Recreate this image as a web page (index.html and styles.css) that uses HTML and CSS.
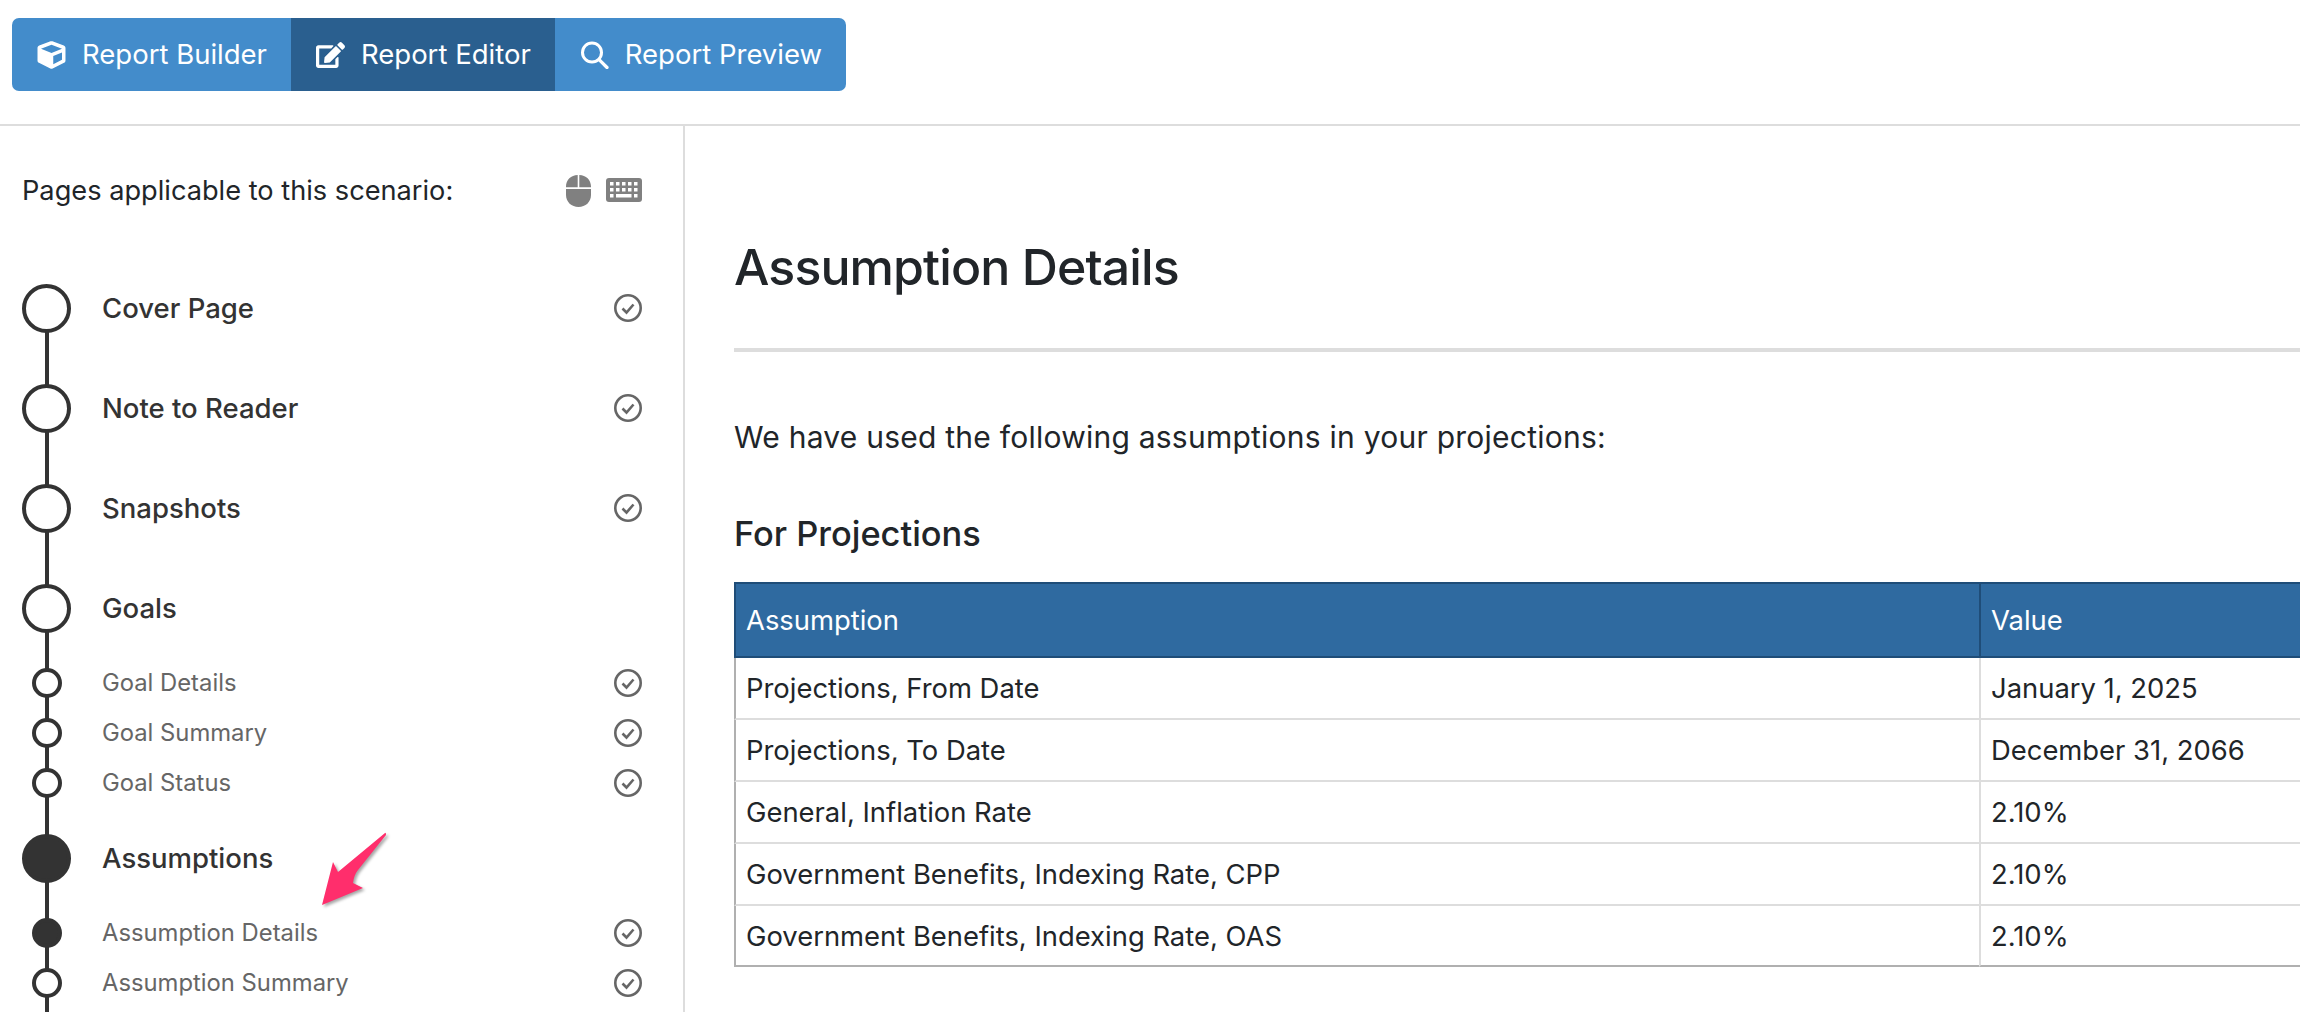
FILE: index.html
```html
<!DOCTYPE html>
<html lang="en">
<head>
<meta charset="utf-8">
<title>Report Editor</title>
<link rel="stylesheet" href="styles.css">
</head>
<body>
<header class="topbar">
  <nav class="btn-group">
    <a class="btn"><svg class="btn-icon" viewBox="0 0 512 512"><path fill="currentColor" d="M239.1 6.3l-208 78c-18.7 7-31.1 25-31.1 45v225.1c0 18.2 10.3 34.8 26.5 42.9l208 104c13.5 6.8 29.4 6.8 42.9 0l208-104c16.3-8.1 26.5-24.8 26.5-42.9V129.3c0-20-12.4-37.9-31.1-44.9l-208-78C262 2.2 250 2.2 239.1 6.3zM256 68.4l192 72v1.1l-192 78-192-78v-1.1l192-72zm32 356V275.5l160-65v133.9l-160 80z"/></svg><span class="btn-text">Report Builder</span></a>
    <a class="btn btn-active"><svg class="btn-icon" viewBox="0 0 576 512"><path fill="currentColor" d="M402.6 83.2l90.2 90.2c3.8 3.8 3.8 10 0 13.8L274.4 405.6l-92.8 10.3c-12.4 1.4-22.9-9.1-21.5-21.5l10.3-92.8L388.8 83.2c3.8-3.8 10-3.8 13.8 0zm162-22.9l-48.8-48.8c-15.2-15.2-39.9-15.2-55.2 0l-35.4 35.4c-3.8 3.8-3.8 10 0 13.8l90.2 90.2c3.8 3.8 10 3.8 13.8 0l35.4-35.4c15.2-15.3 15.2-40 0-55.2zM384 346.2V448H64V128h229.8c3.2 0 6.2-1.3 8.5-3.5l40-40c7.6-7.6 2.2-20.5-8.5-20.5H48C21.5 64 0 85.5 0 112v352c0 26.5 21.5 48 48 48h352c26.5 0 48-21.5 48-48V306.2c0-10.7-12.9-16-20.5-8.5l-40 40c-2.2 2.3-3.5 5.3-3.5 8.5z"/></svg><span class="btn-text">Report Editor</span></a>
    <a class="btn"><svg class="btn-icon" viewBox="0 0 28 28"><circle cx="11.5" cy="11.5" r="9.5" fill="none" stroke="currentColor" stroke-width="3"/><path d="M18.6 18.6L26.5 26.5" fill="none" stroke="currentColor" stroke-width="3.2" stroke-linecap="round"/></svg><span class="btn-text">Report Preview</span></a>
  </nav>
</header>
<div class="layout">
  <aside class="sidebar">
    <div class="side-head">
      <span class="side-title">Pages applicable to this scenario:</span>
      <span class="side-tools">
        <svg class="tool-mouse" viewBox="0 0 25 32"><path fill="currentColor" d="M11.700 0v12.300H0v-.8C0 5 5 0 11.700 0zM13.300 0C20 0 25 5 25 11.500v.8H13.300zM0 14h25v6c0 7-5.500 12-12.500 12S0 27 0 20z"/></svg>
        <svg class="tool-keys" viewBox="0 0 36 24"><rect width="36" height="24" rx="3" fill="currentColor"/><g fill="#fff"><rect x="4" y="4" width="3.500" height="3.500"/><rect x="10" y="4" width="3.500" height="3.500"/><rect x="16" y="4" width="3.500" height="3.500"/><rect x="22" y="4" width="3.500" height="3.500"/><rect x="28" y="4" width="3.500" height="3.500"/><rect x="4" y="10" width="3.500" height="3.500"/><rect x="10" y="10" width="3.500" height="3.500"/><rect x="16" y="10" width="3.500" height="3.500"/><rect x="22" y="10" width="3.500" height="3.500"/><rect x="28" y="10" width="3.500" height="3.500"/><rect x="4" y="16" width="3.500" height="3.500"/><rect x="10" y="16" width="15.500" height="3.500"/><rect x="28" y="16" width="3.500" height="3.500"/></g></svg>
      </span>
    </div>
    <ul class="steps">
      <li class="step step-first"><span class="dot"></span><span class="step-label">Cover Page</span><svg class="check" viewBox="0 0 28 28"><circle cx="14" cy="14" r="12.700"/><path d="M8.500 14.500l4 4 7-8"/></svg></li>
      <li class="step"><span class="dot"></span><span class="step-label">Note to Reader</span><svg class="check" viewBox="0 0 28 28"><circle cx="14" cy="14" r="12.700"/><path d="M8.500 14.500l4 4 7-8"/></svg></li>
      <li class="step"><span class="dot"></span><span class="step-label">Snapshots</span><svg class="check" viewBox="0 0 28 28"><circle cx="14" cy="14" r="12.700"/><path d="M8.500 14.500l4 4 7-8"/></svg></li>
      <li class="step"><span class="dot"></span><span class="step-label">Goals</span></li>
      <li class="step step-sub"><span class="dot"></span><span class="step-label">Goal Details</span><svg class="check" viewBox="0 0 28 28"><circle cx="14" cy="14" r="12.700"/><path d="M8.500 14.500l4 4 7-8"/></svg></li>
      <li class="step step-sub"><span class="dot"></span><span class="step-label">Goal Summary</span><svg class="check" viewBox="0 0 28 28"><circle cx="14" cy="14" r="12.700"/><path d="M8.500 14.500l4 4 7-8"/></svg></li>
      <li class="step step-sub"><span class="dot"></span><span class="step-label">Goal Status</span><svg class="check" viewBox="0 0 28 28"><circle cx="14" cy="14" r="12.700"/><path d="M8.500 14.500l4 4 7-8"/></svg></li>
      <li class="step step-current"><span class="dot"></span><span class="step-label">Assumptions</span></li>
      <li class="step step-sub step-current"><span class="dot"></span><span class="step-label">Assumption Details</span><svg class="check" viewBox="0 0 28 28"><circle cx="14" cy="14" r="12.700"/><path d="M8.500 14.500l4 4 7-8"/></svg></li>
      <li class="step step-sub"><span class="dot"></span><span class="step-label">Assumption Summary</span><svg class="check" viewBox="0 0 28 28"><circle cx="14" cy="14" r="12.700"/><path d="M8.500 14.500l4 4 7-8"/></svg></li>
      <li class="step step-sub"></li>
    </ul>
    <svg class="callout" viewBox="0 0 72 80"><path d="M67 4L20 43 15 33 4 76 45 59 35 54Q36 46 40 41L68 6Q68 3 67 4z"/></svg>
  </aside>
  <main class="content">
    <h1 class="title">Assumption Details</h1>
    <hr class="rule">
    <p class="intro">We have used the following assumptions in your projections:</p>
    <h2 class="subtitle">For Projections</h2>
    <table class="data">
      <thead>
        <tr><th class="col-a">Assumption</th><th class="col-b">Value</th></tr>
      </thead>
      <tbody>
        <tr><td>Projections, From Date</td><td>January 1, 2025</td></tr>
        <tr><td>Projections, To Date</td><td>December 31, 2066</td></tr>
        <tr><td>General, Inflation Rate</td><td>2.10%</td></tr>
        <tr><td>Government Benefits, Indexing Rate, CPP</td><td>2.10%</td></tr>
        <tr><td>Government Benefits, Indexing Rate, OAS</td><td>2.10%</td></tr>
      </tbody>
    </table>
  </main>
</div>
</body>
</html>
```
FILE: styles.css
```css
* { box-sizing: border-box; }
html, body { margin: 0; height: 1012px; overflow: hidden; background: #fff; }
body { font-family: Inter, "Liberation Sans", sans-serif; color: #212529; font-size: 27px; }

.topbar { height: 126px; padding: 18px 12px 0; border-bottom: 2px solid #ddd; }
.btn-group { display: inline-flex; height: 73px; border-radius: 7px; overflow: hidden; background: #438ccb; color: #fff; }
.btn { display: flex; align-items: center; gap: 16px; padding: 0 24px 0 25px; font-size: 27.5px; line-height: 1; }
.btn-text { padding-top: 1px; }
.btn-active { background: #2a5f8f; }
.btn-icon { height: 28px; width: 29px; flex: none; }

.layout { display: flex; height: 886px; }
.sidebar { position: relative; width: 685px; flex: none; border-right: 2px solid #ddd; overflow: hidden; }
.side-head { display: flex; align-items: center; justify-content: space-between; height: 132px; padding: 0 41px 4px 22px; }
.side-title { font-size: 27.2px; }
.side-tools { display: flex; align-items: center; gap: 15px; color: #808080; }
.tool-mouse { width: 25px; height: 32px; display: block; margin-top: 2px; }
.tool-keys { width: 36px; height: 24px; display: block; }

.steps { list-style: none; margin: 0; padding: 0; }
.step { position: relative; display: flex; align-items: center; height: 100px; padding-right: 41px; }
.step::before { content: ""; position: absolute; left: 45px; top: 0; bottom: 0; width: 4px; background: #333; }
.step-first::before { top: 50%; }
.step-sub { height: 50px; }
.dot { position: relative; flex: none; width: 49px; height: 49px; margin: 0 31px 0 22px; border: 4.500px solid #333; border-radius: 50%; background: #fff; }
.step-label { flex: 1; font-size: 27.5px; font-weight: 500; color: #333; }
.step-sub .dot { width: 30px; height: 30px; margin: 0 40px 0 32px; border-width: 4px; }
.step-sub .step-label { padding-bottom: 2px; font-size: 23.8px; font-weight: 400; color: #666; }
.step-current .dot { background: #333; }
.check { flex: none; width: 28px; height: 28px; }
.check circle, .check path { fill: none; stroke: #666; stroke-width: 2.600; }
.callout { position: absolute; left: 318px; top: 703px; width: 72px; height: 80px; fill: #ff2e6c; filter: drop-shadow(2px 2px 1.500px rgba(0,0,0,.35)); }

.content { flex: 1; min-width: 0; padding: 111px 0 0 49px; overflow: hidden; }
.title { margin: 0; font-size: 50px; font-weight: 500; letter-spacing: -.9px; line-height: 60px; color: #212529; }
.rule { height: 4px; margin: 51px 0 0; border: 0; background: #ddd; }
.intro { margin: 65px 0 0; font-size: 30px; letter-spacing: .24px; line-height: 40px; }
.subtitle { margin: 55px 0 0; font-size: 34.400px; font-weight: 500; line-height: 44px; }
.data { margin-top: 26px; width: 2046px; table-layout: fixed; border-collapse: separate; border-spacing: 0; font-size: 27.400px; }
.col-a { width: 1245px; }
.col-b { width: 801px; }
.data th { height: 76px; padding: 0 10px; background: #2f6aa0; color: #fff; font-weight: 400; text-align: left; border-top: 2px solid #1f4d78; border-bottom: 2px solid #1f4d78; border-left: 2px solid #1f4d78; }
.data td { height: 62px; padding: 0 10px; border-bottom: 2px solid #ddd; border-left: 2px solid #ddd; }
.data td:first-child { border-left-color: #b0b0b0; }
.data tr:last-child td { height: 61px; border-bottom-color: #b0b0b0; }
```
